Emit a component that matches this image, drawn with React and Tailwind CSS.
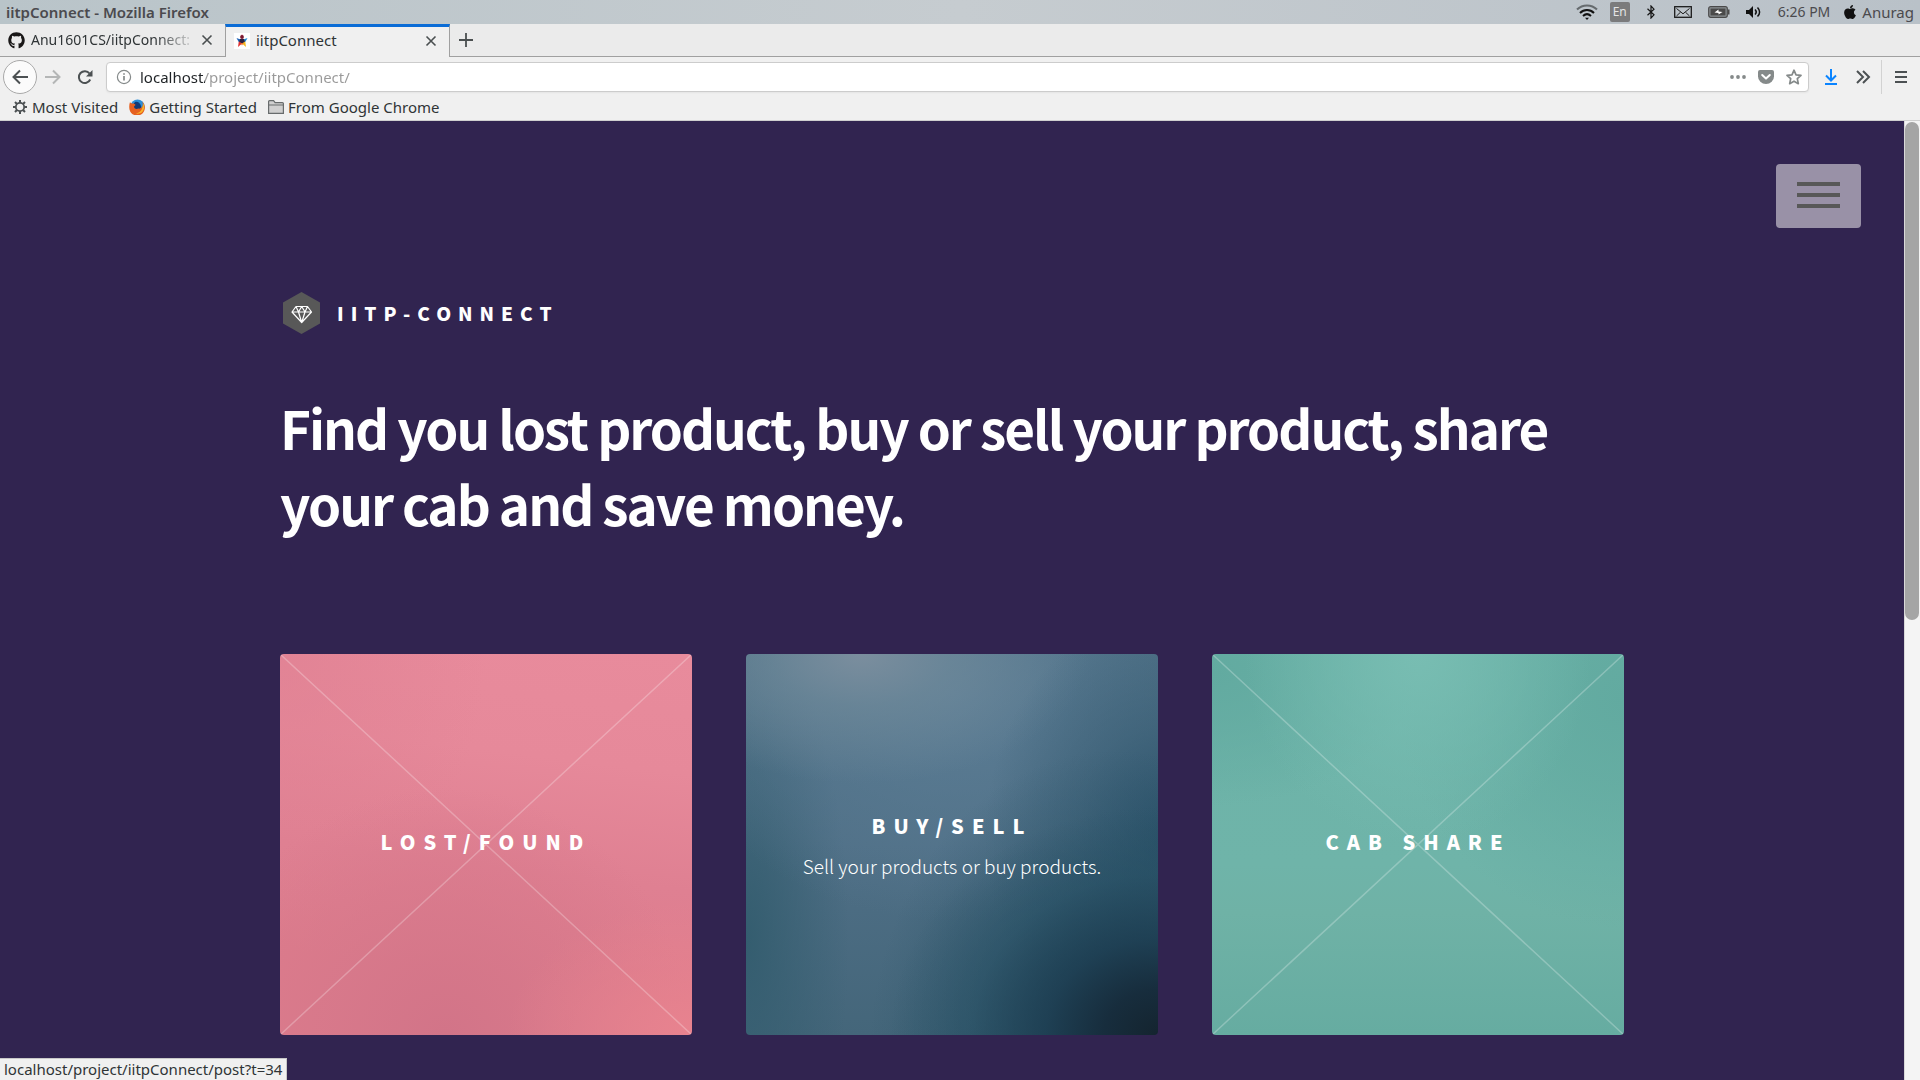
import React from "react";
import { FaGithub, FaApple } from "react-icons/fa";

const UI = "font-['Noto_Sans',sans-serif]";
const PAGE = "font-['Noto_Sans_CJK_SC',sans-serif]";

const stroke = { fill: "none", stroke: "currentColor" };

function Cross() {
  return (
    <svg viewBox="0 0 12 12" className="size-3 text-[#4a4f50]" {...stroke} strokeWidth="1.6">
      <path d="M1.5 1.5l9 9M10.5 1.5l-9 9" />
    </svg>
  );
}

function SystemBar() {
  return (
    <header className="flex h-6 shrink-0 items-center justify-between bg-linear-to-r from-[#b9c4c9] via-[#c6ccd0] to-[#b9c1c8] px-1.5 text-[#4b4a4e]">
      <span className="text-[15px] font-semibold">iitpConnect - Mozilla Firefox</span>
      <div className="flex items-center">
        <svg viewBox="0 0 22 16" className="h-4 w-[22px]" {...stroke} strokeWidth="2">
          <path d="M1 5.5C6.500 0 15.500 0 21 5.500" stroke="#666b6e" />
          <path d="M4 9c4-4 10-4 14 0M7 12c2.500-2.300 5.500-2.300 8 0" stroke="#111" />
          <path d="M9 13.800h4l-2 2.200z" fill="#111" stroke="none" />
        </svg>
        <span className="ml-3 flex size-5 items-center justify-center rounded-xs bg-[#7b7b7c] text-xs text-[#e4e4e4]">En</span>
        <svg viewBox="0 0 10 14" className="ml-4 h-3.5 w-2.5 text-[#151515]" {...stroke} strokeWidth="1.2">
          <path d="M1.500 3.800l6.500 6L5 13V1l3 3.200-6.500 6" />
        </svg>
        <svg viewBox="0 0 18 12" className="ml-[18px] h-3 w-[18px] text-[#1b1b1b]" {...stroke} strokeWidth="1.300">
          <rect x=".7" y=".7" width="16.600" height="10.600" />
          <path d="M2.500 2.500L9 7.800l6.500-5.300M2.500 10l4-3.800M15.500 10l-4-3.800" strokeWidth="1" />
        </svg>
        <svg viewBox="0 0 22 12" className="ml-4 h-3 w-[22px]">
          <rect x=".7" y=".7" width="18.600" height="10.600" rx="2" fill="#8d9295" stroke="#4a4a4a" strokeWidth="1.200" />
          <rect x="2.500" y="2.500" width="15" height="7" fill="#4a4a4a" />
          <path d="M20 3.500h1.500v5H20z" fill="#4a4a4a" />
          <path d="M6.500 6.500L10.500 3.500v2l4 .500-4 2.500V7z" fill="#fff" />
        </svg>
        <svg viewBox="0 0 16 12" className="ml-4 h-3 w-4">
          <path d="M0 4h3l4-4v12L3 8H0z" fill="#111" />
          <path d="M9 3.500c1.500 1.500 1.500 3.500 0 5M11.500 1.500c2.800 2.700 2.800 6.300 0 9" fill="none" stroke="#111" strokeWidth="1.500" />
        </svg>
        <span className="ml-4 text-sm">6:26 PM</span>
        <FaApple className="ml-3 size-4 text-[#111]" />
        <span className="ml-1 text-[15px]">Anurag</span>
      </div>
    </header>
  );
}

function TabStrip() {
  return (
    <div className="flex h-[33px] shrink-0 bg-[#ebebeb] text-[15px] text-[#2f3436]">
      <div className="flex w-[225px] items-center border-b border-[#a0a0a0] pl-2 pr-3">
        <FaGithub className="size-[17px] shrink-0 text-[#191717]" />
        <button className="ml-1.5 min-w-0 flex-1 whitespace-nowrap text-left text-sm mask-r-from-75% mask-r-to-100%">
          Anu1601CS/iitpConnect:
        </button>
        <button aria-label="Close tab" className="ml-1"><Cross /></button>
      </div>
      <div className="flex w-[225px] items-center border-x border-t-3 border-x-[#a0a0a0] border-t-[#0a6cd6] bg-[#f0f0f0] pl-2 pr-3 pb-[3px]">
        <svg viewBox="0 0 16 16" className="size-4 bg-white">
          <path d="M8 1l1.200 3.500H6.800z" fill="#c81f4e" />
          <circle cx="8" cy="4" r="1.900" fill="#7a1830" />
          <path d="M2.500 5l4 1.500L5 9.500z" fill="#1c62b8" />
          <path d="M13.500 5l-4 1.500L11 9.500z" fill="#1b88d4" />
          <path d="M6 6h4l1 3-3 2-3-2z" fill="#2b2140" />
          <path d="M4.800 8.500L8 10.500 4 14z" fill="#e02f2f" />
          <path d="M11.200 8.500L8 10.500l4 3.500z" fill="#f2b51d" />
          <path d="M6.500 10h3L8 12.500z" fill="#ed6b22" />
        </svg>
        <button className="ml-1.5 flex-1 text-left">iitpConnect</button>
        <button aria-label="Close tab"><Cross /></button>
      </div>
      <div className="flex flex-1 items-center border-b border-[#a0a0a0] pl-2">
        <button aria-label="New tab">
          <svg viewBox="0 0 16 16" className="size-4 text-[#4a4f50]" {...stroke} strokeWidth="1.800">
            <path d="M8 1v14M1 8h14" />
          </svg>
        </button>
      </div>
    </div>
  );
}

function NavBar() {
  return (
    <div className="flex h-10 shrink-0 items-center bg-[#f0f0f0] pl-[3px] pr-3 text-[#4c5153]">
      <button aria-label="Back" className="flex size-[34px] items-center justify-center rounded-full border border-[#a9a9a9] bg-[#fbfbfb]">
        <svg viewBox="0 0 16 16" className="size-4" {...stroke} strokeWidth="2">
          <path d="M16 8H1.500M8 1.500L1.500 8 8 14.500" />
        </svg>
      </button>
      <button aria-label="Forward" className="ml-2 text-[#b4b6b6]">
        <svg viewBox="0 0 16 16" className="size-4" {...stroke} strokeWidth="2">
          <path d="M0 8h14.500M8 1.500L14.500 8 8 14.500" />
        </svg>
      </button>
      <button aria-label="Reload" className="ml-4">
        <svg viewBox="0 0 16 16" className="size-4" {...stroke} strokeWidth="2">
          <path d="M13.200 10.500A5.900 5.900 0 1 1 12.500 4.500" />
          <path d="M15.500 1v6.500H9z" fill="currentColor" stroke="none" />
        </svg>
      </button>
      <div className="ml-[13px] flex h-[30px] flex-1 items-center rounded-sm border border-[#cccccc] bg-white pl-[9px] pr-1.5 text-[#858a8a] shadow-xs">
        <svg viewBox="0 0 16 16" className="size-4" {...stroke} strokeWidth="1.200">
          <circle cx="8" cy="8" r="6.600" />
          <path d="M8 7v4.500M8 4.200v1.600" strokeWidth="1.700" />
        </svg>
        <input
          aria-label="Address"
          defaultValue="localhost/project/iitpConnect/"
          className="ml-2 min-w-0 flex-1 bg-[linear-gradient(to_right,#1f2326_65px,#999999_65px)] bg-clip-text text-[15px] text-transparent outline-none"
        />
        <button aria-label="Page actions">
          <svg viewBox="0 0 16 16" className="size-4" fill="currentColor">
            <circle cx="2" cy="8" r="1.900" />
            <circle cx="8" cy="8" r="1.900" />
            <circle cx="14" cy="8" r="1.900" />
          </svg>
        </button>
        <button aria-label="Save to Pocket" className="ml-3">
          <svg viewBox="0 0 16 16" className="size-4">
            <path d="M2 1h12a2 2 0 0 1 2 2v4.500a8 7.500 0 0 1-16 0V3a2 2 0 0 1 2-2z" fill="currentColor" />
            <path d="M4.200 6L8 9.600 11.800 6" fill="none" stroke="#fff" strokeWidth="2" strokeLinecap="round" strokeLinejoin="round" />
          </svg>
        </button>
        <button aria-label="Bookmark this page" className="ml-3">
          <svg viewBox="0 0 16 16" className="size-4" {...stroke} strokeWidth="1.700" strokeLinejoin="round">
            <path d="M8 1.200l2 4.600 5 .500-3.700 3.400 1 5L8 12.200l-4.300 2.500 1-5L1 6.300l5-.500z" />
          </svg>
        </button>
      </div>
      <button aria-label="Downloads" className="ml-3.5 text-[#0a84ff]">
        <svg viewBox="0 0 16 16" className="size-4" {...stroke} strokeWidth="2">
          <path d="M8 0v11M3 6.500l5 5 5-5M2 15h12" />
        </svg>
      </button>
      <button aria-label="More tools" className="ml-4">
        <svg viewBox="0 0 16 16" className="size-4" {...stroke} strokeWidth="2">
          <path d="M2 2l6 6-6 6M8 2l6 6-6 6" />
        </svg>
      </button>
      <span className="ml-2.5 h-[34px] w-px bg-[#d2d2d2]" />
      <button aria-label="Open menu" className="ml-3">
        <svg viewBox="0 0 14 16" className="h-4 w-3.5" {...stroke} strokeWidth="2">
          <path d="M1 3h12M1 8h12M1 13h12" />
        </svg>
      </button>
    </div>
  );
}

function Bookmarks() {
  return (
    <nav className="flex h-6 shrink-0 items-center gap-[11px] border-b border-[#cfcfcf] bg-[#f0f0f0] px-3 pb-[3px] text-[15px]/5 text-[#2f3436]">
      <a href="#most-visited" className="flex items-center gap-1">
        <svg viewBox="0 0 16 16" className="size-4 text-[#4c5153]" {...stroke}>
          <circle cx="8" cy="8" r="4.200" strokeWidth="1.800" />
          <path d="M8 1v3M8 12v3M1 8h3M12 8h3M3 3l2.200 2.200M10.800 10.800L13 13M13 3l-2.200 2.200M5.200 10.800L3 13" strokeWidth="2" />
        </svg>
        Most Visited
      </a>
      <a href="#getting-started" className="flex items-center gap-1">
        <svg viewBox="0 0 16 16" className="size-4">
          <circle cx="8.500" cy="7.500" r="7" fill="#2c8fd8" />
          <path d="M6 3c3-1 5 1 6 4s-2 5-5 4-4-5-1-8z" fill="#143a75" />
          <path d="M1 3c.5 1 1.500 1.500 3 1.500 1 0 2 .500 2.500 1.500L5 7.500c0 2 2 3 4.500 2 1 .5 2.500-.5 3.500-1.500 1.500-1.500 1-4 0-5.500 2.500 2 3.500 5.500 2.500 8.500A7.800 7.800 0 0 1 .5 10.500C0 8 .2 5 1 3z" fill="#e6601f" />
          <path d="M14 4c1.800 3 1.500 7-1 9.200-2 1.500-4.500 1.800-6.500 1 4 .3 7.500-3.200 7.500-10.200z" fill="#f9b52a" />
        </svg>
        Getting Started
      </a>
      <a href="#from-chrome" className="flex items-center gap-1">
        <svg viewBox="0 0 16 16" className="size-4 text-[#686c6d]" strokeWidth="1.200" stroke="currentColor" fill="#d0d0d0">
          <path d="M.6 14.400V2.600q0-1 1-1h4l1.500 2h7.300q1 0 1 1v9.800zM.6 6h14.800" />
        </svg>
        From Google Chrome
      </a>
    </nav>
  );
}

function Tile({ title, text, className, crossed }) {
  return (
    <article className={"relative aspect-[412/381] overflow-hidden rounded-sm " + className}>
      {crossed && (
        <svg viewBox="0 0 100 100" preserveAspectRatio="none" className="absolute inset-0 size-full" aria-hidden="true">
          <path d="M0 0L100 100M100 0L0 100" stroke="#fff" strokeOpacity=".25" strokeWidth="1.500" vectorEffect="non-scaling-stroke" />
        </svg>
      )}
      <a
        href={"#" + title}
        className={"relative flex size-full flex-col items-center justify-center text-center text-white " + (text ? "pb-0" : "pb-1.5")}
      >
        <h2 className="text-xl/8 font-black tracking-[8px] uppercase">{title}</h2>
        {text && <p className="mt-2.5 text-[19px]/7 font-light">{text}</p>}
      </a>
    </article>
  );
}

const tiles = [
  {
    title: "Lost/Found",
    crossed: true,
    className:
      "bg-[radial-gradient(ellipse_45%_35%_at_100%_100%,#e8838f_0%,#e8838f00_100%),radial-gradient(ellipse_60%_65%_at_40%_100%,#d27488_0%,#d5778abb_45%,#d2748800_100%),radial-gradient(ellipse_50%_70%_at_0%_0%,#df8092aa_0%,#df809200_100%),linear-gradient(187deg,#e88b9c_0%,#e6899a_28%,#df8092_55%,#dd7c8c_80%,#dd7c8c_100%)]",
  },
  {
    title: "Buy/Sell",
    text: "Sell your products or buy products.",
    className:
      "bg-[radial-gradient(ellipse_65%_60%_at_100%_100%,#14242f_0%,#172d3d_20%,#1b3b4fcc_42%,#204a5e66_70%,#24506400_100%),radial-gradient(ellipse_60%_80%_at_90%_105%,#234c5f_0%,#2a526699_50%,#2f586c00_100%),radial-gradient(ellipse_45%_60%_at_103%_48%,#2b526a_0%,#33597088_50%,#33597000_100%),radial-gradient(ellipse_55%_34%_at_28%_0%,#7b8e9e_0%,#708a9aaa_40%,#5f7d9500_100%),radial-gradient(ellipse_70%_60%_at_50%_10%,#5c7d95_0%,#5c7d9500_100%),radial-gradient(ellipse_25%_80%_at_0%_75%,#345d6f_0%,#345d6f00_100%),linear-gradient(to_bottom,#4d6f84_0%,#4f6f86_50%,#44667a_100%)]",
  },
  {
    title: "Cab Share",
    crossed: true,
    className:
      "bg-[radial-gradient(ellipse_42%_50%_at_50%_0%,#78bdb2_0%,#78bdb200_100%),radial-gradient(ellipse_55%_60%_at_100%_12%,#62aaa0_0%,#62aaa0aa_40%,#62aaa000_100%),radial-gradient(ellipse_50%_35%_at_0%_5%,#62aaa0_0%,#62aaa0aa_40%,#62aaa000_100%),linear-gradient(to_bottom,#6cb3a8_0%,#6fb4a9_55%,#6fb2a6_68%,#66aca1_100%)]",
  },
];

function Site() {
  return (
    <main className={"relative min-w-0 flex-1 overflow-hidden bg-[#312450] " + PAGE}>
      <button
        aria-label="Menu"
        className="absolute top-[43px] right-[43px] flex h-16 w-[85px] flex-col items-center justify-center gap-[7px] rounded-sm bg-[#9991a7] pb-0.5"
      >
        <span className="h-1 w-[43px] bg-[#585858]" />
        <span className="h-1 w-[43px] bg-[#585858]" />
        <span className="h-1 w-[43px] bg-[#585858]" />
      </button>
      <div className="mx-auto w-full max-w-[1344px] pt-[171px]">
        <a href="#home" className="flex items-center gap-[17px] pl-[3px] text-white">
          <svg viewBox="0 0 37 42" className="h-[42px] w-[37px]">
            <path d="M18.500 0L37 10.500v21L18.500 42 0 31.500v-21z" fill="#585858" />
            <path
              d="M13 14.500h11.500l4 5.500-9.800 10.500L9 20zM9 20h19.500M13 14.500l2.500 5.500 3.200 10.500L22 20l2.500-5.500M18.700 14.500L15.500 20M18.700 14.500L22 20"
              fill="none"
              stroke="#fff"
              strokeWidth="1.200"
              strokeLinejoin="round"
            />
          </svg>
          <span className="text-[19px]/8 font-black tracking-[7px] uppercase">iitp-Connect</span>
        </a>
        <h1 className="mt-[55px] text-[53px]/[76px] font-bold tracking-[-2px] text-white">
          Find you lost product, buy or sell your product, share your cab and save money.
        </h1>
        <section className="mt-[113px] grid grid-cols-3 gap-[54px]">
          {tiles.map((tile) => (
            <Tile key={tile.title} {...tile} />
          ))}
        </section>
      </div>
    </main>
  );
}

export default function App() {
  return (
    <div className={"relative flex h-screen flex-col overflow-hidden bg-[#f0f0f0] " + UI}>
      <SystemBar />
      <TabStrip />
      <NavBar />
      <Bookmarks />
      <div className="flex min-h-0 flex-1">
        <Site />
        <div className="w-4 border-l border-[#d9d9d9] bg-[#f4f4f4] pt-px pr-px">
          <div className="h-[52%] rounded-full bg-[#a5a5a5]" />
        </div>
      </div>
      <div className="absolute bottom-0 left-0 border-t border-r border-[#c8c8c8] bg-[#f0f0f0] px-1 text-[15px]/[21px] text-[#2f3436]">
        localhost/project/iitpConnect/post?t=34
      </div>
    </div>
  );
}
